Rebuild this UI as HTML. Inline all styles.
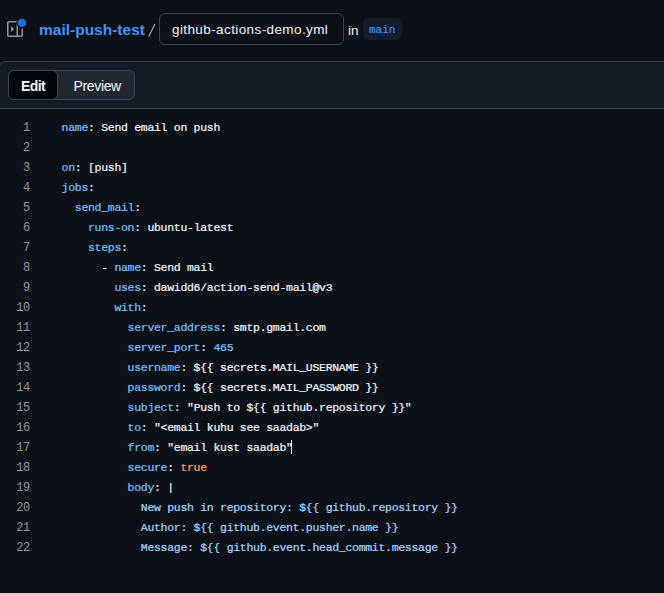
<!DOCTYPE html>
<html><head><meta charset="utf-8">
<style>
*{box-sizing:border-box;margin:0;padding:0}
html,body{width:664px;height:593px;overflow:hidden;background:#0d1117;color:#e6edf3;font-family:"Liberation Sans",sans-serif}
.abs{position:absolute}
#icon{left:7px;top:17px;width:20px;height:21px}
#repo{left:39px;top:21px;font-size:15.5px;font-weight:bold;color:#4493f8;white-space:nowrap}
#slash{left:149px;top:21px;font-size:15.5px;color:#9198a1}
#file{left:159px;top:13px;width:185px;height:32px;border:1px solid #3d444d;border-radius:6px;background:#0d1117}
#filetxt{left:172px;top:22px;font-size:13.5px;letter-spacing:.4px;color:#f0f6fc;white-space:nowrap}
#in{left:348px;top:23px;font-size:13.5px;color:#f0f6fc}
#badge{left:363px;top:18px;width:39px;height:22px;border-radius:6px;background:#121d2f}
#badgetxt{left:369px;top:24px;font-family:"Liberation Mono",monospace;font-size:11px;-webkit-text-stroke:.2px;color:#4493f8}
#hdr{left:-1px;top:61px;width:680px;height:48px;background:#151b23;border:1px solid #3d444d;border-radius:6px 6px 0 0}
#seg{left:8px;top:70px;width:127px;height:30px;background:#212830;border:1px solid #3d444d;border-radius:6px}
#edit{left:8px;top:70px;width:50px;height:30px;background:#010409;border-radius:6px;border:1px solid #3d444d}
#edittxt{left:21px;top:78px;font-size:14px;letter-spacing:-.6px;font-weight:bold;color:#f0f6fc}
#prevtxt{left:73.5px;top:78px;font-size:14px;letter-spacing:-.35px;color:#f0f6fc}
.ln{position:absolute;left:0;width:29.5px;text-align:right;font-family:"Liberation Mono",monospace;font-size:12px;letter-spacing:-.6px;color:#9198a1;height:20px;line-height:20px}
.cl{position:absolute;left:61.6px;font-family:"Liberation Mono",monospace;font-size:11.5px;letter-spacing:-.3px;-webkit-text-stroke:.22px;color:#f0f6fc;height:20px;line-height:20px;white-space:pre}
.k{color:#79c0ff}
.o{color:#ffa657}
.s{color:#a5d6ff}
</style></head><body>
<svg id="icon" class="abs" viewBox="0 0 20 21">
  <defs><mask id="m"><rect x="-5" y="-5" width="30" height="30" fill="#fff"/><circle cx="14.95" cy="1.9" r="5.6" fill="#000"/></mask></defs>
  <g mask="url(#m)" transform="translate(0,4)" fill="#9198a1">
    <path d="M6.823 7.823a.25.25 0 0 1 0 .354l-2.396 2.396A.25.25 0 0 1 4 10.396V5.604a.25.25 0 0 1 .427-.177Z"/>
    <path d="M1.75 0h12.5C15.216 0 16 .784 16 1.75v12.5A1.75 1.75 0 0 1 14.25 16H1.75A1.75 1.75 0 0 1 0 14.25V1.75C0 .784.784 0 1.75 0ZM1.5 1.75v12.5c0 .138.112.25.25.25H9.5v-13H1.75a.25.25 0 0 0-.25.25ZM11 14.5h3.25a.25.25 0 0 0 .25-.25V1.75a.25.25 0 0 0-.25-.25H11Z"/>
  </g>
  <circle cx="14.95" cy="5.9" r="4.2" fill="#1f6feb"/>
</svg>
<div id="repo" class="abs">mail-push-test</div>
<svg class="abs" style="left:140px;top:16px" width="24" height="28" viewBox="140 16 24 28"><line x1="148.7" y1="36.6" x2="154.9" y2="23.9" stroke="#a8afb7" stroke-width="1.15"/></svg>
<div id="file" class="abs"></div>
<div id="filetxt" class="abs">github-actions-demo.yml</div>
<div id="in" class="abs">in</div>
<div id="badge" class="abs"></div>
<div id="badgetxt" class="abs">main</div>
<div id="hdr" class="abs"></div>
<div id="seg" class="abs"></div>
<div id="edit" class="abs"></div>
<div id="edittxt" class="abs">Edit</div>
<div id="prevtxt" class="abs">Preview</div>

<div class="ln" style="top:118px">1</div><div class="cl" style="top:118px"><span class="k">name</span>: Send email on push</div>
<div class="ln" style="top:138px">2</div>
<div class="ln" style="top:158px">3</div><div class="cl" style="top:158px"><span class="k">on</span>: [push]</div>
<div class="ln" style="top:178px">4</div><div class="cl" style="top:178px"><span class="k">jobs</span>:</div>
<div class="ln" style="top:198px">5</div><div class="cl" style="top:198px">  <span class="k">send_mail</span>:</div>
<div class="ln" style="top:218px">6</div><div class="cl" style="top:218px">    <span class="k">runs-on</span>: ubuntu-latest</div>
<div class="ln" style="top:238px">7</div><div class="cl" style="top:238px">    <span class="k">steps</span>:</div>
<div class="ln" style="top:258px">8</div><div class="cl" style="top:258px">      - <span class="k">name</span>: Send mail</div>
<div class="ln" style="top:278px">9</div><div class="cl" style="top:278px">        <span class="k">uses</span>: dawidd6/action-send-mail@v3</div>
<div class="ln" style="top:298px">10</div><div class="cl" style="top:298px">        <span class="k">with</span>:</div>
<div class="ln" style="top:318px">11</div><div class="cl" style="top:318px">          <span class="k">server_address</span>: smtp.gmail.com</div>
<div class="ln" style="top:338px">12</div><div class="cl" style="top:338px">          <span class="k">server_port</span>: <span class="k">465</span></div>
<div class="ln" style="top:358px">13</div><div class="cl" style="top:358px">          <span class="k">username</span>: ${{ secrets.MAIL_USERNAME }}</div>
<div class="ln" style="top:378px">14</div><div class="cl" style="top:378px">          <span class="k">password</span>: ${{ secrets.MAIL_PASSWORD }}</div>
<div class="ln" style="top:398px">15</div><div class="cl" style="top:398px">          <span class="k">subject</span>: "Push to ${{ github.repository }}"</div>
<div class="ln" style="top:418px">16</div><div class="cl" style="top:418px">          <span class="k">to</span>: "&lt;email kuhu see saadab&gt;"</div>
<div class="ln" style="top:438px">17</div><div class="cl" style="top:438px">          <span class="k">from</span>: "email kust saadab"</div>
<div class="ln" style="top:458px">18</div><div class="cl" style="top:458px">          <span class="k">secure</span>: <span class="o">true</span></div>
<div class="ln" style="top:478px">19</div><div class="cl" style="top:478px">          <span class="k">body</span>: |</div>
<div class="ln" style="top:498px">20</div><div class="cl" style="top:498px">            <span class="s">New push in repository: ${{ github.repository }}</span></div>
<div class="ln" style="top:518px">21</div><div class="cl" style="top:518px">            <span class="s">Author: ${{ github.event.pusher.name }}</span></div>
<div class="ln" style="top:538px">22</div><div class="cl" style="top:538px">            <span class="s">Message: ${{ github.event.head_commit.message }}</span></div>
<div class="abs" style="left:291px;top:440px;width:1px;height:14px;background:#e6edf3"></div>
</body></html>
